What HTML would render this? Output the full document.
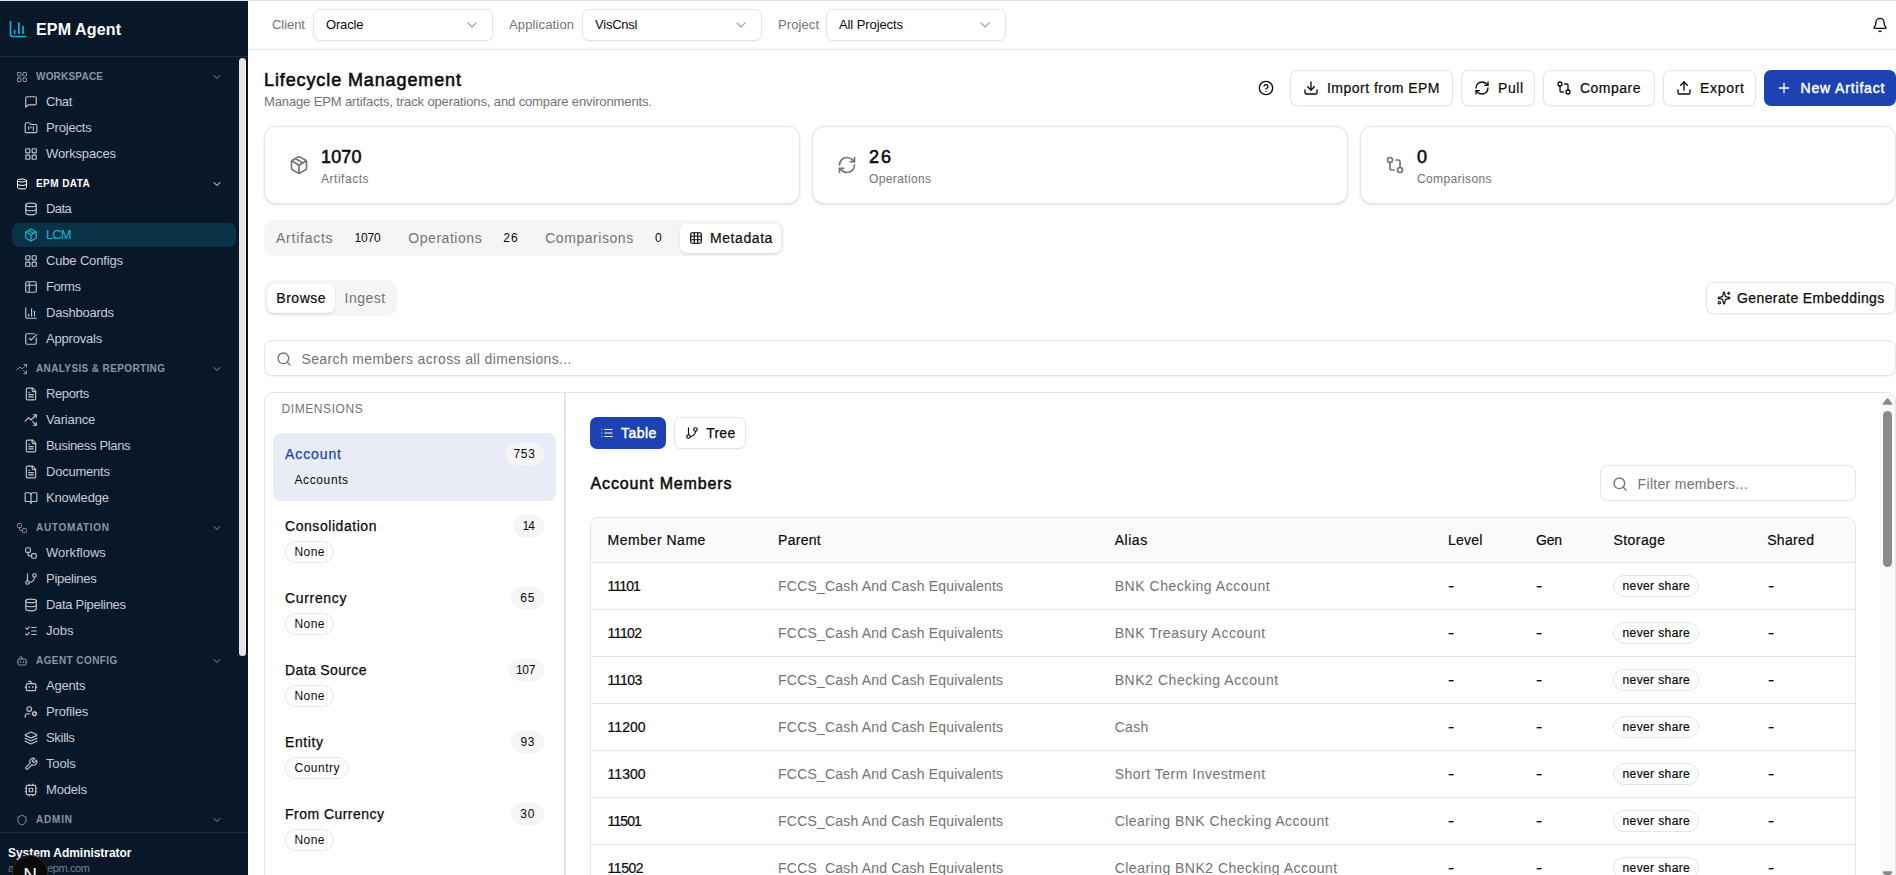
<!DOCTYPE html>
<html lang="en">
<head>
<meta charset="utf-8">
<title>EPM Agent - Lifecycle Management</title>
<style>
html,body{margin:0;padding:0;}
body{width:1896px;height:875px;overflow:hidden;position:relative;background:#fff;
 font-family:"Liberation Sans",sans-serif;-webkit-font-smoothing:antialiased;}
.b{position:absolute;}
.t{position:absolute;white-space:nowrap;}
.ic{position:absolute;overflow:visible;}
</style>
</head>
<body>
<aside>
<div class="b" style="left:0px;top:0px;width:248px;height:875px;background:#091828;"></div>
<div class="b" style="left:0px;top:56px;width:248px;height:1px;background:#1e2b3f;"></div>
<svg class="ic" style="left:8px;top:19px;width:20px;height:20px;" viewBox="0 0 24 24" fill="none" stroke="#12b5d4" stroke-width="2" stroke-linecap="round" stroke-linejoin="round"><path d="M3 3v16a2 2 0 0 0 2 2h16"/><path d="M18 17V9"/><path d="M13 17V5"/><path d="M8 17v-3"/></svg>
<span class="t" style="left:36px;top:20.0px;font-size:16px;line-height:20px;color:#ffffff;font-weight:700;letter-spacing:0.143px;">EPM Agent</span>
<div class="b" style="left:239px;top:58px;width:7px;height:598px;background:#e6e6e6;border-radius:3.5px;"></div>
<svg class="ic" style="left:16px;top:70.5px;width:12px;height:12px;" viewBox="0 0 24 24" fill="none" stroke="#8a94a3" stroke-width="2" stroke-linecap="round" stroke-linejoin="round"><rect width="7" height="7" x="3" y="3" rx="1"/><rect width="7" height="7" x="14" y="3" rx="1"/><rect width="7" height="7" x="14" y="14" rx="1"/><rect width="7" height="7" x="3" y="14" rx="1"/></svg>
<span class="t" style="left:36px;top:68.5px;font-size:10px;line-height:16px;color:#8a94a3;font-weight:700;letter-spacing:0.203px;">WORKSPACE</span>
<svg class="ic" style="left:211px;top:70.5px;width:12px;height:12px;" viewBox="0 0 24 24" fill="none" stroke="#8a94a3" stroke-width="2" stroke-linecap="round" stroke-linejoin="round"><path d="m6 9 6 6 6-6"/></svg>
<svg class="ic" style="left:24px;top:95.0px;width:14px;height:14px;" viewBox="0 0 24 24" fill="none" stroke="#bcc3ce" stroke-width="2" stroke-linecap="round" stroke-linejoin="round"><path d="M21 15a2 2 0 0 1-2 2H7l-4 4V5a2 2 0 0 1 2-2h14a2 2 0 0 1 2 2z"/></svg>
<span class="t" style="left:46px;top:92.0px;font-size:13px;line-height:20px;color:#c6ccd6;letter-spacing:-0.390px;">Chat</span>
<svg class="ic" style="left:24px;top:121.0px;width:14px;height:14px;" viewBox="0 0 24 24" fill="none" stroke="#bcc3ce" stroke-width="2" stroke-linecap="round" stroke-linejoin="round"><path d="M4 20h16a2 2 0 0 0 2-2V8a2 2 0 0 0-2-2h-7.93a2 2 0 0 1-1.66-.9l-.82-1.2A2 2 0 0 0 7.93 3H4a2 2 0 0 0-2 2v13c0 1.1.9 2 2 2Z"/><path d="M8 10v4"/><path d="M12 10v2"/><path d="M16 10v6"/></svg>
<span class="t" style="left:46px;top:118.0px;font-size:13px;line-height:20px;color:#c6ccd6;letter-spacing:-0.167px;">Projects</span>
<svg class="ic" style="left:24px;top:147.0px;width:14px;height:14px;" viewBox="0 0 24 24" fill="none" stroke="#bcc3ce" stroke-width="2" stroke-linecap="round" stroke-linejoin="round"><rect width="7" height="7" x="3" y="3" rx="1"/><rect width="7" height="7" x="14" y="3" rx="1"/><rect width="7" height="7" x="14" y="14" rx="1"/><rect width="7" height="7" x="3" y="14" rx="1"/></svg>
<span class="t" style="left:46px;top:144.0px;font-size:13px;line-height:20px;color:#c6ccd6;letter-spacing:-0.144px;">Workspaces</span>
<svg class="ic" style="left:16px;top:177.5px;width:12px;height:12px;" viewBox="0 0 24 24" fill="none" stroke="#ffffff" stroke-width="2" stroke-linecap="round" stroke-linejoin="round"><ellipse cx="12" cy="5" rx="9" ry="3"/><path d="M3 5V19A9 3 0 0 0 21 19V5"/><path d="M3 12A9 3 0 0 0 21 12"/></svg>
<span class="t" style="left:36px;top:175.5px;font-size:10px;line-height:16px;color:#ffffff;font-weight:700;letter-spacing:0.436px;">EPM DATA</span>
<svg class="ic" style="left:211px;top:177.5px;width:12px;height:12px;" viewBox="0 0 24 24" fill="none" stroke="#ffffff" stroke-width="2" stroke-linecap="round" stroke-linejoin="round"><path d="m6 9 6 6 6-6"/></svg>
<svg class="ic" style="left:24px;top:202.0px;width:14px;height:14px;" viewBox="0 0 24 24" fill="none" stroke="#bcc3ce" stroke-width="2" stroke-linecap="round" stroke-linejoin="round"><ellipse cx="12" cy="5" rx="9" ry="3"/><path d="M3 5V19A9 3 0 0 0 21 19V5"/><path d="M3 12A9 3 0 0 0 21 12"/></svg>
<span class="t" style="left:46px;top:199.0px;font-size:13px;line-height:20px;color:#c6ccd6;letter-spacing:-0.556px;">Data</span>
<div class="b" style="left:12px;top:223.0px;width:223.5px;height:24px;background:#093247;border-radius:7px;"></div>
<svg class="ic" style="left:24px;top:228.0px;width:14px;height:14px;" viewBox="0 0 24 24" fill="none" stroke="#12b5d4" stroke-width="2" stroke-linecap="round" stroke-linejoin="round"><path d="M11 21.73a2 2 0 0 0 2 0l7-4A2 2 0 0 0 21 16V8a2 2 0 0 0-1-1.73l-7-4a2 2 0 0 0-2 0l-7 4A2 2 0 0 0 3 8v8a2 2 0 0 0 1 1.73z"/><path d="M12 22V12"/><path d="m3.3 7 7.703 4.734a2 2 0 0 0 1.994 0L20.7 7"/><path d="m7.5 4.27 9 5.15"/></svg>
<span class="t" style="left:46px;top:225.0px;font-size:13px;line-height:20px;color:#12b5d4;letter-spacing:-0.900px;">LCM</span>
<svg class="ic" style="left:24px;top:254.0px;width:14px;height:14px;" viewBox="0 0 24 24" fill="none" stroke="#bcc3ce" stroke-width="2" stroke-linecap="round" stroke-linejoin="round"><rect width="7" height="7" x="3" y="3" rx="1"/><rect width="7" height="7" x="14" y="3" rx="1"/><rect width="7" height="7" x="14" y="14" rx="1"/><rect width="7" height="7" x="3" y="14" rx="1"/></svg>
<span class="t" style="left:46px;top:251.0px;font-size:13px;line-height:20px;color:#c6ccd6;letter-spacing:-0.162px;">Cube Configs</span>
<svg class="ic" style="left:24px;top:280.0px;width:14px;height:14px;" viewBox="0 0 24 24" fill="none" stroke="#bcc3ce" stroke-width="2" stroke-linecap="round" stroke-linejoin="round"><path d="M9 3H5a2 2 0 0 0-2 2v4m6-6h10a2 2 0 0 1 2 2v4M9 3v18m0 0h10a2 2 0 0 0 2-2V9M9 21H5a2 2 0 0 1-2-2V9m0 0h18"/></svg>
<span class="t" style="left:46px;top:277.0px;font-size:13px;line-height:20px;color:#c6ccd6;letter-spacing:-0.461px;">Forms</span>
<svg class="ic" style="left:24px;top:306.0px;width:14px;height:14px;" viewBox="0 0 24 24" fill="none" stroke="#bcc3ce" stroke-width="2" stroke-linecap="round" stroke-linejoin="round"><path d="M3 3v16a2 2 0 0 0 2 2h16"/><path d="M18 17V9"/><path d="M13 17V5"/><path d="M8 17v-3"/></svg>
<span class="t" style="left:46px;top:303.0px;font-size:13px;line-height:20px;color:#c6ccd6;letter-spacing:-0.234px;">Dashboards</span>
<svg class="ic" style="left:24px;top:332.0px;width:14px;height:14px;" viewBox="0 0 24 24" fill="none" stroke="#bcc3ce" stroke-width="2" stroke-linecap="round" stroke-linejoin="round"><path d="M21 10.5V19a2 2 0 0 1-2 2H5a2 2 0 0 1-2-2V5a2 2 0 0 1 2-2h12.5"/><path d="m9 11 3 3L22 4"/></svg>
<span class="t" style="left:46px;top:329.0px;font-size:13px;line-height:20px;color:#c6ccd6;letter-spacing:-0.189px;">Approvals</span>
<svg class="ic" style="left:16px;top:362.5px;width:12px;height:12px;" viewBox="0 0 24 24" fill="none" stroke="#8a94a3" stroke-width="2" stroke-linecap="round" stroke-linejoin="round"><path d="M14.828 14.828 21 21"/><path d="M21 16v5h-5"/><path d="m21 3-9 9-4-4-6 6"/><path d="M21 8V3h-5"/></svg>
<span class="t" style="left:36px;top:360.5px;font-size:10px;line-height:16px;color:#8a94a3;font-weight:700;letter-spacing:0.375px;">ANALYSIS &amp; REPORTING</span>
<svg class="ic" style="left:211px;top:362.5px;width:12px;height:12px;" viewBox="0 0 24 24" fill="none" stroke="#8a94a3" stroke-width="2" stroke-linecap="round" stroke-linejoin="round"><path d="m6 9 6 6 6-6"/></svg>
<svg class="ic" style="left:24px;top:387.0px;width:14px;height:14px;" viewBox="0 0 24 24" fill="none" stroke="#bcc3ce" stroke-width="2" stroke-linecap="round" stroke-linejoin="round"><path d="M15 2H6a2 2 0 0 0-2 2v16a2 2 0 0 0 2 2h12a2 2 0 0 0 2-2V7Z"/><path d="M14 2v4a2 2 0 0 0 2 2h4"/><path d="M10 9H8"/><path d="M16 13H8"/><path d="M16 17H8"/></svg>
<span class="t" style="left:46px;top:384.0px;font-size:13px;line-height:20px;color:#c6ccd6;letter-spacing:-0.372px;">Reports</span>
<svg class="ic" style="left:24px;top:413.0px;width:14px;height:14px;" viewBox="0 0 24 24" fill="none" stroke="#bcc3ce" stroke-width="2" stroke-linecap="round" stroke-linejoin="round"><path d="M14.828 14.828 21 21"/><path d="M21 16v5h-5"/><path d="m21 3-9 9-4-4-6 6"/><path d="M21 8V3h-5"/></svg>
<span class="t" style="left:46px;top:410.0px;font-size:13px;line-height:20px;color:#c6ccd6;letter-spacing:-0.149px;">Variance</span>
<svg class="ic" style="left:24px;top:439.0px;width:14px;height:14px;" viewBox="0 0 24 24" fill="none" stroke="#bcc3ce" stroke-width="2" stroke-linecap="round" stroke-linejoin="round"><path d="M15 2H6a2 2 0 0 0-2 2v16a2 2 0 0 0 2 2h12a2 2 0 0 0 2-2V7Z"/><path d="M14 2v4a2 2 0 0 0 2 2h4"/><path d="M10 9H8"/><path d="M16 13H8"/><path d="M16 17H8"/></svg>
<span class="t" style="left:46px;top:436.0px;font-size:13px;line-height:20px;color:#c6ccd6;letter-spacing:-0.330px;">Business Plans</span>
<svg class="ic" style="left:24px;top:465.0px;width:14px;height:14px;" viewBox="0 0 24 24" fill="none" stroke="#bcc3ce" stroke-width="2" stroke-linecap="round" stroke-linejoin="round"><path d="M15 2H6a2 2 0 0 0-2 2v16a2 2 0 0 0 2 2h12a2 2 0 0 0 2-2V7Z"/><path d="M14 2v4a2 2 0 0 0 2 2h4"/><path d="M10 9H8"/><path d="M16 13H8"/><path d="M16 17H8"/></svg>
<span class="t" style="left:46px;top:462.0px;font-size:13px;line-height:20px;color:#c6ccd6;letter-spacing:-0.219px;">Documents</span>
<svg class="ic" style="left:24px;top:491.0px;width:14px;height:14px;" viewBox="0 0 24 24" fill="none" stroke="#bcc3ce" stroke-width="2" stroke-linecap="round" stroke-linejoin="round"><path d="M12 7v14"/><path d="M3 18a1 1 0 0 1-1-1V4a1 1 0 0 1 1-1h5a4 4 0 0 1 4 4 4 4 0 0 1 4-4h5a1 1 0 0 1 1 1v13a1 1 0 0 1-1 1h-6a3 3 0 0 0-3 3 3 3 0 0 0-3-3z"/></svg>
<span class="t" style="left:46px;top:488.0px;font-size:13px;line-height:20px;color:#c6ccd6;letter-spacing:-0.166px;">Knowledge</span>
<svg class="ic" style="left:16px;top:521.5px;width:12px;height:12px;" viewBox="0 0 24 24" fill="none" stroke="#8a94a3" stroke-width="2" stroke-linecap="round" stroke-linejoin="round"><rect width="8" height="8" x="3" y="3" rx="2"/><path d="M7 11v4a2 2 0 0 0 2 2h4"/><rect width="8" height="8" x="13" y="13" rx="2"/></svg>
<span class="t" style="left:36px;top:519.5px;font-size:10px;line-height:16px;color:#8a94a3;font-weight:700;letter-spacing:0.682px;">AUTOMATION</span>
<svg class="ic" style="left:211px;top:521.5px;width:12px;height:12px;" viewBox="0 0 24 24" fill="none" stroke="#8a94a3" stroke-width="2" stroke-linecap="round" stroke-linejoin="round"><path d="m6 9 6 6 6-6"/></svg>
<svg class="ic" style="left:24px;top:546.0px;width:14px;height:14px;" viewBox="0 0 24 24" fill="none" stroke="#bcc3ce" stroke-width="2" stroke-linecap="round" stroke-linejoin="round"><rect width="8" height="8" x="3" y="3" rx="2"/><path d="M7 11v4a2 2 0 0 0 2 2h4"/><rect width="8" height="8" x="13" y="13" rx="2"/></svg>
<span class="t" style="left:46px;top:543.0px;font-size:13px;line-height:20px;color:#c6ccd6;letter-spacing:0.010px;">Workflows</span>
<svg class="ic" style="left:24px;top:572.0px;width:14px;height:14px;" viewBox="0 0 24 24" fill="none" stroke="#bcc3ce" stroke-width="2" stroke-linecap="round" stroke-linejoin="round"><line x1="6" x2="6" y1="3" y2="15"/><circle cx="18" cy="6" r="3"/><circle cx="6" cy="18" r="3"/><path d="M18 9a9 9 0 0 1-9 9"/></svg>
<span class="t" style="left:46px;top:569.0px;font-size:13px;line-height:20px;color:#c6ccd6;letter-spacing:-0.246px;">Pipelines</span>
<svg class="ic" style="left:24px;top:598.0px;width:14px;height:14px;" viewBox="0 0 24 24" fill="none" stroke="#bcc3ce" stroke-width="2" stroke-linecap="round" stroke-linejoin="round"><ellipse cx="12" cy="5" rx="9" ry="3"/><path d="M3 5V19A9 3 0 0 0 21 19V5"/><path d="M3 12A9 3 0 0 0 21 12"/></svg>
<span class="t" style="left:46px;top:595.0px;font-size:13px;line-height:20px;color:#c6ccd6;letter-spacing:-0.294px;">Data Pipelines</span>
<svg class="ic" style="left:24px;top:624.0px;width:14px;height:14px;" viewBox="0 0 24 24" fill="none" stroke="#bcc3ce" stroke-width="2" stroke-linecap="round" stroke-linejoin="round"><path d="m3 17 2 2 4-4"/><path d="m3 7 2 2 4-4"/><path d="M13 6h8"/><path d="M13 12h8"/><path d="M13 18h8"/></svg>
<span class="t" style="left:46px;top:621.0px;font-size:13px;line-height:20px;color:#c6ccd6;letter-spacing:0.010px;">Jobs</span>
<svg class="ic" style="left:16px;top:654.5px;width:12px;height:12px;" viewBox="0 0 24 24" fill="none" stroke="#8a94a3" stroke-width="2" stroke-linecap="round" stroke-linejoin="round"><path d="M12 8V4H8"/><rect width="16" height="12" x="4" y="8" rx="2"/><path d="M2 14h2"/><path d="M20 14h2"/><path d="M15 13v2"/><path d="M9 13v2"/></svg>
<span class="t" style="left:36px;top:652.5px;font-size:10px;line-height:16px;color:#8a94a3;font-weight:700;letter-spacing:0.421px;">AGENT CONFIG</span>
<svg class="ic" style="left:211px;top:654.5px;width:12px;height:12px;" viewBox="0 0 24 24" fill="none" stroke="#8a94a3" stroke-width="2" stroke-linecap="round" stroke-linejoin="round"><path d="m6 9 6 6 6-6"/></svg>
<svg class="ic" style="left:24px;top:679.0px;width:14px;height:14px;" viewBox="0 0 24 24" fill="none" stroke="#bcc3ce" stroke-width="2" stroke-linecap="round" stroke-linejoin="round"><path d="M12 8V4H8"/><rect width="16" height="12" x="4" y="8" rx="2"/><path d="M2 14h2"/><path d="M20 14h2"/><path d="M15 13v2"/><path d="M9 13v2"/></svg>
<span class="t" style="left:46px;top:676.0px;font-size:13px;line-height:20px;color:#c6ccd6;letter-spacing:-0.197px;">Agents</span>
<svg class="ic" style="left:24px;top:705.0px;width:14px;height:14px;" viewBox="0 0 24 24" fill="none" stroke="#bcc3ce" stroke-width="2" stroke-linecap="round" stroke-linejoin="round"><circle cx="18" cy="15" r="3"/><circle cx="9" cy="7" r="4"/><path d="M10 15H6a4 4 0 0 0-4 4v2"/><path d="m21.7 16.4-.9-.3"/><path d="m15.2 13.9-.9-.3"/><path d="m16.6 18.7.3-.9"/><path d="m19.1 12.2.3-.9"/><path d="m19.6 18.7-.4-1"/><path d="m16.8 12.3-.4-1"/><path d="m14.3 16.6 1-.4"/><path d="m20.7 13.8 1-.4"/></svg>
<span class="t" style="left:46px;top:702.0px;font-size:13px;line-height:20px;color:#c6ccd6;letter-spacing:-0.151px;">Profiles</span>
<svg class="ic" style="left:24px;top:731.0px;width:14px;height:14px;" viewBox="0 0 24 24" fill="none" stroke="#bcc3ce" stroke-width="2" stroke-linecap="round" stroke-linejoin="round"><path d="M12.83 2.18a2 2 0 0 0-1.66 0L2.6 6.08a1 1 0 0 0 0 1.83l8.58 3.91a2 2 0 0 0 1.66 0l8.58-3.9a1 1 0 0 0 0-1.83z"/><path d="M2 12a1 1 0 0 0 .58.91l8.6 3.91a2 2 0 0 0 1.65 0l8.58-3.9A1 1 0 0 0 22 12"/><path d="M2 17a1 1 0 0 0 .58.91l8.6 3.91a2 2 0 0 0 1.65 0l8.58-3.9A1 1 0 0 0 22 17"/></svg>
<span class="t" style="left:46px;top:728.0px;font-size:13px;line-height:20px;color:#c6ccd6;letter-spacing:-0.309px;">Skills</span>
<svg class="ic" style="left:24px;top:757.0px;width:14px;height:14px;" viewBox="0 0 24 24" fill="none" stroke="#bcc3ce" stroke-width="2" stroke-linecap="round" stroke-linejoin="round"><path d="M14.7 6.3a1 1 0 0 0 0 1.4l1.6 1.6a1 1 0 0 0 1.4 0l3.77-3.77a6 6 0 0 1-7.94 7.94l-6.91 6.91a2.12 2.12 0 0 1-3-3l6.91-6.91a6 6 0 0 1 7.94-7.94l-3.76 3.76z"/></svg>
<span class="t" style="left:46px;top:754.0px;font-size:13px;line-height:20px;color:#c6ccd6;letter-spacing:-0.140px;">Tools</span>
<svg class="ic" style="left:24px;top:783.0px;width:14px;height:14px;" viewBox="0 0 24 24" fill="none" stroke="#bcc3ce" stroke-width="2" stroke-linecap="round" stroke-linejoin="round"><rect width="16" height="16" x="4" y="4" rx="2"/><rect width="6" height="6" x="9" y="9" rx="1"/><path d="M15 2v2"/><path d="M15 20v2"/><path d="M2 15h2"/><path d="M2 9h2"/><path d="M20 15h2"/><path d="M20 9h2"/><path d="M9 2v2"/><path d="M9 20v2"/></svg>
<span class="t" style="left:46px;top:780.0px;font-size:13px;line-height:20px;color:#c6ccd6;letter-spacing:-0.184px;">Models</span>
<svg class="ic" style="left:16px;top:813.5px;width:12px;height:12px;" viewBox="0 0 24 24" fill="none" stroke="#8a94a3" stroke-width="2" stroke-linecap="round" stroke-linejoin="round"><path d="M20 13c0 5-3.5 7.5-7.66 8.95a1 1 0 0 1-.67-.01C7.5 20.5 4 18 4 13V6a1 1 0 0 1 1-1c2 0 4.5-1.2 6.24-2.72a1.17 1.17 0 0 1 1.52 0C14.51 3.81 17 5 19 5a1 1 0 0 1 1 1z"/></svg>
<span class="t" style="left:36px;top:811.5px;font-size:10px;line-height:16px;color:#8a94a3;font-weight:700;letter-spacing:0.805px;">ADMIN</span>
<svg class="ic" style="left:211px;top:813.5px;width:12px;height:12px;" viewBox="0 0 24 24" fill="none" stroke="#8a94a3" stroke-width="2" stroke-linecap="round" stroke-linejoin="round"><path d="m6 9 6 6 6-6"/></svg>
<div class="b" style="left:0px;top:832px;width:248px;height:1px;background:#1e2b3f;"></div>
<span class="t" style="left:8px;top:844.5px;font-size:12px;line-height:16px;color:#ffffff;font-weight:700;letter-spacing:-0.040px;">System Administrator</span>
<span class="t" style="left:8px;top:861.0px;font-size:11px;line-height:14px;color:#74818f;letter-spacing:-0.365px;">admin@epm.com</span>
<div class="b" style="left:12.5px;top:856px;width:34.5px;height:34.5px;border-radius:50%;background:#0a0a0a;box-shadow:0 0 0 1px #2a2a2a, 0 4px 10px rgba(0,0,0,.5);"></div>
<span class="t" style="left:23.2px;top:865.3px;font-size:19px;line-height:20px;color:#ffffff;">N</span>
</aside>
<main>
<div class="b" style="left:248px;top:0px;width:1648px;height:875px;background:#ffffff;"></div>
<div class="b" style="left:248px;top:49px;width:1648px;height:1px;background:#e5e5e5;"></div>
<span class="t" style="left:272px;top:14.5px;font-size:13px;line-height:20px;color:#737373;letter-spacing:-0.050px;">Client</span><div class="b" style="left:313px;top:9px;width:180px;height:32px;border:1px solid #e5e5e5;border-radius:7px;box-sizing:border-box;background:#fff;box-shadow:0 1px 2px rgba(0,0,0,.05);"></div><span class="t" style="left:326px;top:14.5px;font-size:13px;line-height:20px;color:#0a0a0a;letter-spacing:-0.159px;">Oracle</span><svg class="ic" style="left:463.5px;top:17px;width:16px;height:16px;" viewBox="0 0 24 24" fill="none" stroke="#a6a6a6" stroke-width="1.8" stroke-linecap="round" stroke-linejoin="round"><path d="m6 9 6 6 6-6"/></svg>
<span class="t" style="left:509px;top:14.5px;font-size:13px;line-height:20px;color:#737373;letter-spacing:0.139px;">Application</span><div class="b" style="left:582px;top:9px;width:180px;height:32px;border:1px solid #e5e5e5;border-radius:7px;box-sizing:border-box;background:#fff;box-shadow:0 1px 2px rgba(0,0,0,.05);"></div><span class="t" style="left:595px;top:14.5px;font-size:13px;line-height:20px;color:#0a0a0a;letter-spacing:-0.224px;">VisCnsl</span><svg class="ic" style="left:732.5px;top:17px;width:16px;height:16px;" viewBox="0 0 24 24" fill="none" stroke="#a6a6a6" stroke-width="1.8" stroke-linecap="round" stroke-linejoin="round"><path d="m6 9 6 6 6-6"/></svg>
<span class="t" style="left:778px;top:14.5px;font-size:13px;line-height:20px;color:#737373;letter-spacing:0.089px;">Project</span><div class="b" style="left:826px;top:9px;width:180px;height:32px;border:1px solid #e5e5e5;border-radius:7px;box-sizing:border-box;background:#fff;box-shadow:0 1px 2px rgba(0,0,0,.05);"></div><span class="t" style="left:839px;top:14.5px;font-size:13px;line-height:20px;color:#0a0a0a;letter-spacing:-0.094px;">All Projects</span><svg class="ic" style="left:976.5px;top:17px;width:16px;height:16px;" viewBox="0 0 24 24" fill="none" stroke="#a6a6a6" stroke-width="1.8" stroke-linecap="round" stroke-linejoin="round"><path d="m6 9 6 6 6-6"/></svg>
<svg class="ic" style="left:1872px;top:17px;width:16px;height:16px;" viewBox="0 0 24 24" fill="none" stroke="#0a0a0a" stroke-width="2" stroke-linecap="round" stroke-linejoin="round"><path d="M10.268 21a2 2 0 0 0 3.464 0"/><path d="M3.262 15.326A1 1 0 0 0 4 17h16a1 1 0 0 0 .74-1.673C19.41 13.956 18 12.499 18 8A6 6 0 0 0 6 8c0 4.499-1.411 5.956-2.738 7.326"/></svg>
<span class="t" style="left:264px;top:65.5px;font-size:18px;line-height:28px;color:#0a0a0a;letter-spacing:0.889px;-webkit-text-stroke:.55px #0a0a0a;">Lifecycle Management</span>
<span class="t" style="left:264px;top:91.5px;font-size:13px;line-height:20px;color:#737373;letter-spacing:-0.125px;">Manage EPM artifacts, track operations, and compare environments.</span>
<svg class="ic" style="left:1258px;top:80px;width:16px;height:16px;" viewBox="0 0 24 24" fill="none" stroke="#0a0a0a" stroke-width="2" stroke-linecap="round" stroke-linejoin="round"><circle cx="12" cy="12" r="10"/><path d="M9.09 9a3 3 0 0 1 5.83 1c0 2-3 3-3 3"/><path d="M12 17h.01"/></svg>
<div class="b" style="left:1290px;top:70px;width:163px;height:36px;border:1px solid #e5e5e5;border-radius:7px;box-sizing:border-box;background:#fff;box-shadow:0 1px 2px rgba(0,0,0,.05);"></div><svg class="ic" style="left:1303px;top:80.0px;width:16px;height:16px;" viewBox="0 0 24 24" fill="none" stroke="#0a0a0a" stroke-width="2" stroke-linecap="round" stroke-linejoin="round"><path d="M21 15v4a2 2 0 0 1-2 2H5a2 2 0 0 1-2-2v-4"/><polyline points="7 10 12 15 17 10"/><line x1="12" x2="12" y1="15" y2="3"/></svg><span class="t" style="left:1327px;top:78.0px;font-size:14px;line-height:20px;color:#0a0a0a;letter-spacing:0.479px;-webkit-text-stroke:.2px #0a0a0a;">Import from EPM</span>
<div class="b" style="left:1461px;top:70px;width:74px;height:36px;border:1px solid #e5e5e5;border-radius:7px;box-sizing:border-box;background:#fff;box-shadow:0 1px 2px rgba(0,0,0,.05);"></div><svg class="ic" style="left:1474px;top:80.0px;width:16px;height:16px;" viewBox="0 0 24 24" fill="none" stroke="#0a0a0a" stroke-width="2" stroke-linecap="round" stroke-linejoin="round"><path d="M3 12a9 9 0 0 1 9-9 9.75 9.75 0 0 1 6.74 2.74L21 8"/><path d="M21 3v5h-5"/><path d="M21 12a9 9 0 0 1-9 9 9.75 9.75 0 0 1-6.74-2.74L3 16"/><path d="M8 16H3v5"/></svg><span class="t" style="left:1498px;top:78.0px;font-size:14px;line-height:20px;color:#0a0a0a;letter-spacing:0.547px;-webkit-text-stroke:.2px #0a0a0a;">Pull</span>
<div class="b" style="left:1543px;top:70px;width:112px;height:36px;border:1px solid #e5e5e5;border-radius:7px;box-sizing:border-box;background:#fff;box-shadow:0 1px 2px rgba(0,0,0,.05);"></div><svg class="ic" style="left:1556px;top:80.0px;width:16px;height:16px;" viewBox="0 0 24 24" fill="none" stroke="#0a0a0a" stroke-width="2" stroke-linecap="round" stroke-linejoin="round"><circle cx="18" cy="18" r="3"/><circle cx="6" cy="6" r="3"/><path d="M13 6h3a2 2 0 0 1 2 2v7"/><path d="M11 18H8a2 2 0 0 1-2-2V9"/></svg><span class="t" style="left:1580px;top:78.0px;font-size:14px;line-height:20px;color:#0a0a0a;letter-spacing:0.484px;-webkit-text-stroke:.2px #0a0a0a;">Compare</span>
<div class="b" style="left:1663px;top:70px;width:93px;height:36px;border:1px solid #e5e5e5;border-radius:7px;box-sizing:border-box;background:#fff;box-shadow:0 1px 2px rgba(0,0,0,.05);"></div><svg class="ic" style="left:1676px;top:80.0px;width:16px;height:16px;" viewBox="0 0 24 24" fill="none" stroke="#0a0a0a" stroke-width="2" stroke-linecap="round" stroke-linejoin="round"><path d="M21 15v4a2 2 0 0 1-2 2H5a2 2 0 0 1-2-2v-4"/><polyline points="17 8 12 3 7 8"/><line x1="12" x2="12" y1="3" y2="15"/></svg><span class="t" style="left:1700px;top:78.0px;font-size:14px;line-height:20px;color:#0a0a0a;letter-spacing:0.706px;-webkit-text-stroke:.2px #0a0a0a;">Export</span>
<div class="b" style="left:1764px;top:70px;width:132px;height:36px;background:#1d42b2;border-radius:7px;"></div><svg class="ic" style="left:1776px;top:80.0px;width:16px;height:16px;" viewBox="0 0 24 24" fill="none" stroke="#ffffff" stroke-width="2" stroke-linecap="round" stroke-linejoin="round"><path d="M5 12h14"/><path d="M12 5v14"/></svg><span class="t" style="left:1800.5px;top:78.0px;font-size:14px;line-height:20px;color:#ffffff;letter-spacing:0.845px;-webkit-text-stroke:.45px #fff;">New Artifact</span>
<div class="b" style="left:264px;top:126px;width:536px;height:78px;border:1px solid #e5e5e5;border-radius:12px;box-sizing:border-box;background:#fff;box-shadow:0 1px 3px rgba(0,0,0,.1),0 1px 2px -1px rgba(0,0,0,.1);"></div><svg class="ic" style="left:289px;top:155px;width:20px;height:20px;" viewBox="0 0 24 24" fill="none" stroke="#737373" stroke-width="2" stroke-linecap="round" stroke-linejoin="round"><path d="M11 21.73a2 2 0 0 0 2 0l7-4A2 2 0 0 0 21 16V8a2 2 0 0 0-1-1.73l-7-4a2 2 0 0 0-2 0l-7 4A2 2 0 0 0 3 8v8a2 2 0 0 0 1 1.73z"/><path d="M12 22V12"/><path d="m3.3 7 7.703 4.734a2 2 0 0 0 1.994 0L20.7 7"/><path d="m7.5 4.27 9 5.15"/></svg><span class="t" style="left:321px;top:143.0px;font-size:18px;line-height:28px;color:#0a0a0a;letter-spacing:0.151px;-webkit-text-stroke:.55px #0a0a0a;">1070</span><span class="t" style="left:321px;top:171.0px;font-size:12px;line-height:16px;color:#737373;letter-spacing:0.520px;">Artifacts</span>
<div class="b" style="left:812px;top:126px;width:536px;height:78px;border:1px solid #e5e5e5;border-radius:12px;box-sizing:border-box;background:#fff;box-shadow:0 1px 3px rgba(0,0,0,.1),0 1px 2px -1px rgba(0,0,0,.1);"></div><svg class="ic" style="left:837px;top:155px;width:20px;height:20px;" viewBox="0 0 24 24" fill="none" stroke="#737373" stroke-width="2" stroke-linecap="round" stroke-linejoin="round"><path d="M3 12a9 9 0 0 1 9-9 9.75 9.75 0 0 1 6.74 2.74L21 8"/><path d="M21 3v5h-5"/><path d="M21 12a9 9 0 0 1-9 9 9.75 9.75 0 0 1-6.74-2.74L3 16"/><path d="M8 16H3v5"/></svg><span class="t" style="left:869px;top:143.0px;font-size:18px;line-height:28px;color:#0a0a0a;letter-spacing:1.969px;-webkit-text-stroke:.55px #0a0a0a;">26</span><span class="t" style="left:869px;top:171.0px;font-size:12px;line-height:16px;color:#737373;letter-spacing:0.366px;">Operations</span>
<div class="b" style="left:1360px;top:126px;width:536px;height:78px;border:1px solid #e5e5e5;border-radius:12px;box-sizing:border-box;background:#fff;box-shadow:0 1px 3px rgba(0,0,0,.1),0 1px 2px -1px rgba(0,0,0,.1);"></div><svg class="ic" style="left:1385px;top:155px;width:20px;height:20px;" viewBox="0 0 24 24" fill="none" stroke="#737373" stroke-width="2" stroke-linecap="round" stroke-linejoin="round"><circle cx="18" cy="18" r="3"/><circle cx="6" cy="6" r="3"/><path d="M13 6h3a2 2 0 0 1 2 2v7"/><path d="M11 18H8a2 2 0 0 1-2-2V9"/></svg><span class="t" style="left:1417px;top:143.0px;font-size:18px;line-height:28px;color:#0a0a0a;letter-spacing:0.000px;-webkit-text-stroke:.55px #0a0a0a;">0</span><span class="t" style="left:1417px;top:171.0px;font-size:12px;line-height:16px;color:#737373;letter-spacing:0.380px;">Comparisons</span>
<div class="b" style="left:264px;top:220px;width:520px;height:36px;background:#f5f5f5;border-radius:10px;"></div>
<span class="t" style="left:276px;top:228.0px;font-size:14px;line-height:20px;color:#737373;letter-spacing:0.753px;">Artifacts</span>
<span class="t" style="left:354.6px;top:230.0px;font-size:12px;line-height:16px;color:#0a0a0a;letter-spacing:-0.234px;">1070</span>
<span class="t" style="left:408.3px;top:228.0px;font-size:14px;line-height:20px;color:#737373;letter-spacing:0.546px;">Operations</span>
<span class="t" style="left:503.2px;top:230.0px;font-size:12px;line-height:16px;color:#0a0a0a;letter-spacing:1.141px;">26</span>
<span class="t" style="left:545.2px;top:228.0px;font-size:14px;line-height:20px;color:#737373;letter-spacing:0.552px;">Comparisons</span>
<span class="t" style="left:654.9px;top:230.0px;font-size:12px;line-height:16px;color:#0a0a0a;letter-spacing:0.000px;">0</span>
<div class="b" style="left:680px;top:224px;width:101px;height:29px;background:#fff;border-radius:7px;box-shadow:0 1px 3px rgba(0,0,0,.1),0 1px 2px -1px rgba(0,0,0,.1);"></div>
<svg class="ic" style="left:689px;top:231px;width:14px;height:14px;" viewBox="0 0 24 24" fill="none" stroke="#0a0a0a" stroke-width="2" stroke-linecap="round" stroke-linejoin="round"><rect width="18" height="18" x="3" y="3" rx="2"/><path d="M3 9h18"/><path d="M3 15h18"/><path d="M9 3v18"/><path d="M15 3v18"/></svg>
<span class="t" style="left:710px;top:228.0px;font-size:14px;line-height:20px;color:#0a0a0a;letter-spacing:0.575px;-webkit-text-stroke:.2px #0a0a0a;">Metadata</span>
<div class="b" style="left:264px;top:280px;width:133px;height:36px;background:#f5f5f5;border-radius:10px;"></div>
<div class="b" style="left:267px;top:284px;width:68px;height:29px;background:#fff;border-radius:7px;box-shadow:0 1px 3px rgba(0,0,0,.1),0 1px 2px -1px rgba(0,0,0,.1);"></div>
<span class="t" style="left:276.3px;top:288.0px;font-size:14px;line-height:20px;color:#0a0a0a;letter-spacing:0.522px;-webkit-text-stroke:.2px #0a0a0a;">Browse</span>
<span class="t" style="left:344.5px;top:288.0px;font-size:14px;line-height:20px;color:#737373;letter-spacing:0.492px;">Ingest</span>
<div class="b" style="left:1706px;top:282px;width:190px;height:32px;border:1px solid #e5e5e5;border-radius:7px;box-sizing:border-box;background:#fff;box-shadow:0 1px 2px rgba(0,0,0,.05);"></div>
<svg class="ic" style="left:1717px;top:291px;width:14px;height:14px;" viewBox="0 0 24 24" fill="none" stroke="#0a0a0a" stroke-width="2" stroke-linecap="round" stroke-linejoin="round"><path d="M11.017 2.814a1 1 0 0 1 1.966 0l1.051 5.558a2 2 0 0 0 1.594 1.594l5.558 1.051a1 1 0 0 1 0 1.966l-5.558 1.051a2 2 0 0 0-1.594 1.594l-1.051 5.558a1 1 0 0 1-1.966 0l-1.051-5.558a2 2 0 0 0-1.594-1.594l-5.558-1.051a1 1 0 0 1 0-1.966l5.558-1.051a2 2 0 0 0 1.594-1.594z"/><path d="M20 2v4"/><path d="M22 4h-4"/><circle cx="4" cy="20" r="2"/></svg>
<span class="t" style="left:1737px;top:288.0px;font-size:14px;line-height:20px;color:#0a0a0a;letter-spacing:0.400px;-webkit-text-stroke:.25px #0a0a0a;">Generate Embeddings</span>
<div class="b" style="left:264px;top:340px;width:1632px;height:36px;border:1px solid #e5e5e5;border-radius:8px;box-sizing:border-box;background:#fff;box-shadow:0 1px 2px rgba(0,0,0,.05);"></div>
<svg class="ic" style="left:276px;top:350.5px;width:16px;height:16px;" viewBox="0 0 24 24" fill="none" stroke="#737373" stroke-width="2" stroke-linecap="round" stroke-linejoin="round"><circle cx="11" cy="11" r="8"/><path d="m21 21-4.3-4.3"/></svg>
<span class="t" style="left:301.5px;top:348.5px;font-size:14px;line-height:20px;color:#737373;letter-spacing:0.368px;">Search members across all dimensions...</span>
<div class="b" style="left:264px;top:392px;width:1632px;height:500px;border:1px solid #e5e5e5;border-radius:9px;box-sizing:border-box;background:#fff;"></div>
<div class="b" style="left:564px;top:393px;width:2px;height:490px;background:#e5e5e5;"></div>
<span class="t" style="left:281.5px;top:401.0px;font-size:12px;line-height:16px;color:#737373;letter-spacing:0.587px;">DIMENSIONS</span>
<div class="b" style="left:273px;top:433px;width:283px;height:68px;background:#e9ecf7;border-radius:8px;"></div>
<span class="t" style="left:285px;top:444.0px;font-size:14px;line-height:20px;color:#1d42b2;letter-spacing:0.901px;-webkit-text-stroke:.25px currentColor;">Account</span>
<div class="b" style="left:504.70000000000005px;top:443px;width:39px;height:22px;background:#f5f5f5;border-radius:11px;"></div>
<span class="t" style="left:513.45px;top:446.0px;font-size:12px;line-height:16px;color:#0a0a0a;letter-spacing:0.734px;">753</span>
<div class="b" style="left:285px;top:469px;width:72.1px;height:22px;border:1px solid #e5e5e5;border-radius:11px;box-sizing:border-box;background:transparent;"></div>
<span class="t" style="left:294.5px;top:472.0px;font-size:12px;line-height:16px;color:#0a0a0a;letter-spacing:0.606px;">Accounts</span>
<span class="t" style="left:285px;top:516.0px;font-size:14px;line-height:20px;color:#0a0a0a;letter-spacing:0.555px;-webkit-text-stroke:.25px currentColor;">Consolidation</span>
<div class="b" style="left:513.2px;top:515px;width:30.5px;height:22px;background:#f5f5f5;border-radius:11px;"></div>
<span class="t" style="left:522.5500000000001px;top:518.0px;font-size:12px;line-height:16px;color:#0a0a0a;letter-spacing:-0.900px;">14</span>
<div class="b" style="left:285px;top:541px;width:48.5px;height:22px;border:1px solid #e5e5e5;border-radius:11px;box-sizing:border-box;background:#fff;"></div>
<span class="t" style="left:294.5px;top:544.0px;font-size:12px;line-height:16px;color:#0a0a0a;letter-spacing:0.438px;">None</span>
<span class="t" style="left:285px;top:588.0px;font-size:14px;line-height:20px;color:#0a0a0a;letter-spacing:0.672px;-webkit-text-stroke:.25px currentColor;">Currency</span>
<div class="b" style="left:511.00000000000006px;top:587px;width:32.7px;height:22px;background:#f5f5f5;border-radius:11px;"></div>
<span class="t" style="left:520.35px;top:590.0px;font-size:12px;line-height:16px;color:#0a0a0a;letter-spacing:0.641px;">65</span>
<div class="b" style="left:285px;top:613px;width:48.5px;height:22px;border:1px solid #e5e5e5;border-radius:11px;box-sizing:border-box;background:#fff;"></div>
<span class="t" style="left:294.5px;top:616.0px;font-size:12px;line-height:16px;color:#0a0a0a;letter-spacing:0.438px;">None</span>
<span class="t" style="left:285px;top:660.0px;font-size:14px;line-height:20px;color:#0a0a0a;letter-spacing:0.367px;-webkit-text-stroke:.25px currentColor;">Data Source</span>
<div class="b" style="left:507.70000000000005px;top:659px;width:36px;height:22px;background:#f5f5f5;border-radius:11px;"></div>
<span class="t" style="left:515.95px;top:662.0px;font-size:12px;line-height:16px;color:#0a0a0a;letter-spacing:-0.266px;">107</span>
<div class="b" style="left:285px;top:685px;width:48.5px;height:22px;border:1px solid #e5e5e5;border-radius:11px;box-sizing:border-box;background:#fff;"></div>
<span class="t" style="left:294.5px;top:688.0px;font-size:12px;line-height:16px;color:#0a0a0a;letter-spacing:0.438px;">None</span>
<span class="t" style="left:285px;top:732.0px;font-size:14px;line-height:20px;color:#0a0a0a;letter-spacing:0.597px;-webkit-text-stroke:.25px currentColor;">Entity</span>
<div class="b" style="left:511.1px;top:731px;width:32.6px;height:22px;background:#f5f5f5;border-radius:11px;"></div>
<span class="t" style="left:520.4px;top:734.0px;font-size:12px;line-height:16px;color:#0a0a0a;letter-spacing:0.641px;">93</span>
<div class="b" style="left:285px;top:757px;width:63.5px;height:22px;border:1px solid #e5e5e5;border-radius:11px;box-sizing:border-box;background:#fff;"></div>
<span class="t" style="left:294.5px;top:760.0px;font-size:12px;line-height:16px;color:#0a0a0a;letter-spacing:0.495px;">Country</span>
<span class="t" style="left:285px;top:804.0px;font-size:14px;line-height:20px;color:#0a0a0a;letter-spacing:0.470px;-webkit-text-stroke:.25px currentColor;">From Currency</span>
<div class="b" style="left:511.1px;top:803px;width:32.6px;height:22px;background:#f5f5f5;border-radius:11px;"></div>
<span class="t" style="left:520.3000000000001px;top:806.0px;font-size:12px;line-height:16px;color:#0a0a0a;letter-spacing:0.841px;">30</span>
<div class="b" style="left:285px;top:829px;width:48.5px;height:22px;border:1px solid #e5e5e5;border-radius:11px;box-sizing:border-box;background:#fff;"></div>
<span class="t" style="left:294.5px;top:832.0px;font-size:12px;line-height:16px;color:#0a0a0a;letter-spacing:0.438px;">None</span>
<div class="b" style="left:590px;top:417px;width:76px;height:32px;background:#1d42b2;border-radius:7px;"></div>
<svg class="ic" style="left:600px;top:426px;width:14px;height:14px;" viewBox="0 0 24 24" fill="none" stroke="#fff" stroke-width="2" stroke-linecap="round" stroke-linejoin="round"><path d="M3 12h.01"/><path d="M3 18h.01"/><path d="M3 6h.01"/><path d="M8 12h13"/><path d="M8 18h13"/><path d="M8 6h13"/></svg>
<span class="t" style="left:621px;top:423.0px;font-size:14px;line-height:20px;color:#fff;letter-spacing:0.458px;-webkit-text-stroke:.45px #fff;">Table</span>
<div class="b" style="left:674px;top:417px;width:72px;height:32px;border:1px solid #e5e5e5;border-radius:7px;box-sizing:border-box;background:#fff;box-shadow:0 1px 2px rgba(0,0,0,.05);"></div>
<svg class="ic" style="left:685px;top:426px;width:14px;height:14px;" viewBox="0 0 24 24" fill="none" stroke="#0a0a0a" stroke-width="2" stroke-linecap="round" stroke-linejoin="round"><line x1="6" x2="6" y1="3" y2="15"/><circle cx="18" cy="6" r="3"/><circle cx="6" cy="18" r="3"/><path d="M18 9a9 9 0 0 1-9 9"/></svg>
<span class="t" style="left:706.2px;top:423.0px;font-size:14px;line-height:20px;color:#0a0a0a;letter-spacing:0.240px;-webkit-text-stroke:.25px #0a0a0a;">Tree</span>
<span class="t" style="left:590.5px;top:471.5px;font-size:16px;line-height:24px;color:#0a0a0a;letter-spacing:0.862px;-webkit-text-stroke:.5px #0a0a0a;">Account Members</span>
<div class="b" style="left:1600px;top:465px;width:256px;height:36px;border:1px solid #e5e5e5;border-radius:8px;box-sizing:border-box;background:#fff;box-shadow:0 1px 2px rgba(0,0,0,.05);"></div>
<svg class="ic" style="left:1612px;top:475.5px;width:16px;height:16px;" viewBox="0 0 24 24" fill="none" stroke="#737373" stroke-width="2" stroke-linecap="round" stroke-linejoin="round"><circle cx="11" cy="11" r="8"/><path d="m21 21-4.3-4.3"/></svg>
<span class="t" style="left:1637.6px;top:473.5px;font-size:14px;line-height:20px;color:#737373;letter-spacing:0.312px;">Filter members...</span>
<div class="b" style="left:590px;top:517px;width:1266px;height:380px;border:1px solid #e5e5e5;border-radius:8px;box-sizing:border-box;background:#fff;"></div>
<div class="b" style="left:591px;top:518px;width:1264px;height:44px;background:#fafafa;border-radius:7px 7px 0 0;"></div>
<div class="b" style="left:591px;top:562px;width:1264px;height:1px;background:#e5e5e5;"></div>
<span class="t" style="left:607.6px;top:530.0px;font-size:14px;line-height:20px;color:#0a0a0a;letter-spacing:0.521px;-webkit-text-stroke:.2px #0a0a0a;">Member Name</span>
<span class="t" style="left:778.1px;top:530.0px;font-size:14px;line-height:20px;color:#0a0a0a;letter-spacing:0.270px;-webkit-text-stroke:.2px #0a0a0a;">Parent</span>
<span class="t" style="left:1114.7px;top:530.0px;font-size:14px;line-height:20px;color:#0a0a0a;letter-spacing:0.535px;-webkit-text-stroke:.2px #0a0a0a;">Alias</span>
<span class="t" style="left:1448.1px;top:530.0px;font-size:14px;line-height:20px;color:#0a0a0a;letter-spacing:0.208px;-webkit-text-stroke:.2px #0a0a0a;">Level</span>
<span class="t" style="left:1536px;top:530.0px;font-size:14px;line-height:20px;color:#0a0a0a;letter-spacing:-0.234px;-webkit-text-stroke:.2px #0a0a0a;">Gen</span>
<span class="t" style="left:1613.5px;top:530.0px;font-size:14px;line-height:20px;color:#0a0a0a;letter-spacing:0.426px;-webkit-text-stroke:.2px #0a0a0a;">Storage</span>
<span class="t" style="left:1767.2px;top:530.0px;font-size:14px;line-height:20px;color:#0a0a0a;letter-spacing:0.329px;-webkit-text-stroke:.2px #0a0a0a;">Shared</span>
<span class="t" style="left:607.6px;top:576.0px;font-size:14px;line-height:20px;color:#0a0a0a;letter-spacing:-0.900px;-webkit-text-stroke:.2px #0a0a0a;">11101</span>
<span class="t" style="left:778.1px;top:576.0px;font-size:14px;line-height:20px;color:#737373;letter-spacing:0.191px;">FCCS_Cash And Cash Equivalents</span>
<span class="t" style="left:1114.7px;top:576.0px;font-size:14px;line-height:20px;color:#737373;letter-spacing:0.539px;">BNK Checking Account</span>
<span class="t" style="left:1448.4px;top:576.0px;font-size:14px;line-height:20px;color:#0a0a0a;transform:scaleX(1.35);transform-origin:0 50%;-webkit-text-stroke:.2px #0a0a0a;">-</span>
<span class="t" style="left:1536.3px;top:576.0px;font-size:14px;line-height:20px;color:#0a0a0a;transform:scaleX(1.35);transform-origin:0 50%;-webkit-text-stroke:.2px #0a0a0a;">-</span>
<div class="b" style="left:1613px;top:575px;width:86px;height:22px;border:1px solid #e5e5e5;border-radius:11px;box-sizing:border-box;background:#fff;"></div>
<span class="t" style="left:1622.5px;top:578.0px;font-size:12px;line-height:16px;color:#0a0a0a;letter-spacing:0.392px;-webkit-text-stroke:.2px #0a0a0a;">never share</span>
<span class="t" style="left:1767.5px;top:576.0px;font-size:14px;line-height:20px;color:#0a0a0a;transform:scaleX(1.35);transform-origin:0 50%;-webkit-text-stroke:.2px #0a0a0a;">-</span>
<div class="b" style="left:591px;top:609px;width:1264px;height:1px;background:#e5e5e5;"></div>
<span class="t" style="left:607.6px;top:623.0px;font-size:14px;line-height:20px;color:#0a0a0a;letter-spacing:-0.590px;-webkit-text-stroke:.2px #0a0a0a;">11102</span>
<span class="t" style="left:778.1px;top:623.0px;font-size:14px;line-height:20px;color:#737373;letter-spacing:0.191px;">FCCS_Cash And Cash Equivalents</span>
<span class="t" style="left:1114.7px;top:623.0px;font-size:14px;line-height:20px;color:#737373;letter-spacing:0.508px;">BNK Treasury Account</span>
<span class="t" style="left:1448.4px;top:623.0px;font-size:14px;line-height:20px;color:#0a0a0a;transform:scaleX(1.35);transform-origin:0 50%;-webkit-text-stroke:.2px #0a0a0a;">-</span>
<span class="t" style="left:1536.3px;top:623.0px;font-size:14px;line-height:20px;color:#0a0a0a;transform:scaleX(1.35);transform-origin:0 50%;-webkit-text-stroke:.2px #0a0a0a;">-</span>
<div class="b" style="left:1613px;top:622px;width:86px;height:22px;border:1px solid #e5e5e5;border-radius:11px;box-sizing:border-box;background:#fff;"></div>
<span class="t" style="left:1622.5px;top:625.0px;font-size:12px;line-height:16px;color:#0a0a0a;letter-spacing:0.392px;-webkit-text-stroke:.2px #0a0a0a;">never share</span>
<span class="t" style="left:1767.5px;top:623.0px;font-size:14px;line-height:20px;color:#0a0a0a;transform:scaleX(1.35);transform-origin:0 50%;-webkit-text-stroke:.2px #0a0a0a;">-</span>
<div class="b" style="left:591px;top:656px;width:1264px;height:1px;background:#e5e5e5;"></div>
<span class="t" style="left:607.6px;top:670.0px;font-size:14px;line-height:20px;color:#0a0a0a;letter-spacing:-0.540px;-webkit-text-stroke:.2px #0a0a0a;">11103</span>
<span class="t" style="left:778.1px;top:670.0px;font-size:14px;line-height:20px;color:#737373;letter-spacing:0.191px;">FCCS_Cash And Cash Equivalents</span>
<span class="t" style="left:1114.7px;top:670.0px;font-size:14px;line-height:20px;color:#737373;letter-spacing:0.548px;">BNK2 Checking Account</span>
<span class="t" style="left:1448.4px;top:670.0px;font-size:14px;line-height:20px;color:#0a0a0a;transform:scaleX(1.35);transform-origin:0 50%;-webkit-text-stroke:.2px #0a0a0a;">-</span>
<span class="t" style="left:1536.3px;top:670.0px;font-size:14px;line-height:20px;color:#0a0a0a;transform:scaleX(1.35);transform-origin:0 50%;-webkit-text-stroke:.2px #0a0a0a;">-</span>
<div class="b" style="left:1613px;top:669px;width:86px;height:22px;border:1px solid #e5e5e5;border-radius:11px;box-sizing:border-box;background:#fff;"></div>
<span class="t" style="left:1622.5px;top:672.0px;font-size:12px;line-height:16px;color:#0a0a0a;letter-spacing:0.392px;-webkit-text-stroke:.2px #0a0a0a;">never share</span>
<span class="t" style="left:1767.5px;top:670.0px;font-size:14px;line-height:20px;color:#0a0a0a;transform:scaleX(1.35);transform-origin:0 50%;-webkit-text-stroke:.2px #0a0a0a;">-</span>
<div class="b" style="left:591px;top:703px;width:1264px;height:1px;background:#e5e5e5;"></div>
<span class="t" style="left:607.6px;top:717.0px;font-size:14px;line-height:20px;color:#0a0a0a;letter-spacing:0.023px;-webkit-text-stroke:.2px #0a0a0a;">11200</span>
<span class="t" style="left:778.1px;top:717.0px;font-size:14px;line-height:20px;color:#737373;letter-spacing:0.191px;">FCCS_Cash And Cash Equivalents</span>
<span class="t" style="left:1114.7px;top:717.0px;font-size:14px;line-height:20px;color:#737373;letter-spacing:0.271px;">Cash</span>
<span class="t" style="left:1448.4px;top:717.0px;font-size:14px;line-height:20px;color:#0a0a0a;transform:scaleX(1.35);transform-origin:0 50%;-webkit-text-stroke:.2px #0a0a0a;">-</span>
<span class="t" style="left:1536.3px;top:717.0px;font-size:14px;line-height:20px;color:#0a0a0a;transform:scaleX(1.35);transform-origin:0 50%;-webkit-text-stroke:.2px #0a0a0a;">-</span>
<div class="b" style="left:1613px;top:716px;width:86px;height:22px;border:1px solid #e5e5e5;border-radius:11px;box-sizing:border-box;background:#fff;"></div>
<span class="t" style="left:1622.5px;top:719.0px;font-size:12px;line-height:16px;color:#0a0a0a;letter-spacing:0.392px;-webkit-text-stroke:.2px #0a0a0a;">never share</span>
<span class="t" style="left:1767.5px;top:717.0px;font-size:14px;line-height:20px;color:#0a0a0a;transform:scaleX(1.35);transform-origin:0 50%;-webkit-text-stroke:.2px #0a0a0a;">-</span>
<div class="b" style="left:591px;top:750px;width:1264px;height:1px;background:#e5e5e5;"></div>
<span class="t" style="left:607.6px;top:764.0px;font-size:14px;line-height:20px;color:#0a0a0a;letter-spacing:0.023px;-webkit-text-stroke:.2px #0a0a0a;">11300</span>
<span class="t" style="left:778.1px;top:764.0px;font-size:14px;line-height:20px;color:#737373;letter-spacing:0.191px;">FCCS_Cash And Cash Equivalents</span>
<span class="t" style="left:1114.7px;top:764.0px;font-size:14px;line-height:20px;color:#737373;letter-spacing:0.496px;">Short Term Investment</span>
<span class="t" style="left:1448.4px;top:764.0px;font-size:14px;line-height:20px;color:#0a0a0a;transform:scaleX(1.35);transform-origin:0 50%;-webkit-text-stroke:.2px #0a0a0a;">-</span>
<span class="t" style="left:1536.3px;top:764.0px;font-size:14px;line-height:20px;color:#0a0a0a;transform:scaleX(1.35);transform-origin:0 50%;-webkit-text-stroke:.2px #0a0a0a;">-</span>
<div class="b" style="left:1613px;top:763px;width:86px;height:22px;border:1px solid #e5e5e5;border-radius:11px;box-sizing:border-box;background:#fff;"></div>
<span class="t" style="left:1622.5px;top:766.0px;font-size:12px;line-height:16px;color:#0a0a0a;letter-spacing:0.392px;-webkit-text-stroke:.2px #0a0a0a;">never share</span>
<span class="t" style="left:1767.5px;top:764.0px;font-size:14px;line-height:20px;color:#0a0a0a;transform:scaleX(1.35);transform-origin:0 50%;-webkit-text-stroke:.2px #0a0a0a;">-</span>
<div class="b" style="left:591px;top:797px;width:1264px;height:1px;background:#e5e5e5;"></div>
<span class="t" style="left:607.6px;top:811.0px;font-size:14px;line-height:20px;color:#0a0a0a;letter-spacing:-0.900px;-webkit-text-stroke:.2px #0a0a0a;">11501</span>
<span class="t" style="left:778.1px;top:811.0px;font-size:14px;line-height:20px;color:#737373;letter-spacing:0.191px;">FCCS_Cash And Cash Equivalents</span>
<span class="t" style="left:1114.7px;top:811.0px;font-size:14px;line-height:20px;color:#737373;letter-spacing:0.472px;">Clearing BNK Checking Account</span>
<span class="t" style="left:1448.4px;top:811.0px;font-size:14px;line-height:20px;color:#0a0a0a;transform:scaleX(1.35);transform-origin:0 50%;-webkit-text-stroke:.2px #0a0a0a;">-</span>
<span class="t" style="left:1536.3px;top:811.0px;font-size:14px;line-height:20px;color:#0a0a0a;transform:scaleX(1.35);transform-origin:0 50%;-webkit-text-stroke:.2px #0a0a0a;">-</span>
<div class="b" style="left:1613px;top:810px;width:86px;height:22px;border:1px solid #e5e5e5;border-radius:11px;box-sizing:border-box;background:#fff;"></div>
<span class="t" style="left:1622.5px;top:813.0px;font-size:12px;line-height:16px;color:#0a0a0a;letter-spacing:0.392px;-webkit-text-stroke:.2px #0a0a0a;">never share</span>
<span class="t" style="left:1767.5px;top:811.0px;font-size:14px;line-height:20px;color:#0a0a0a;transform:scaleX(1.35);transform-origin:0 50%;-webkit-text-stroke:.2px #0a0a0a;">-</span>
<div class="b" style="left:591px;top:844px;width:1264px;height:1px;background:#e5e5e5;"></div>
<span class="t" style="left:607.6px;top:858.0px;font-size:14px;line-height:20px;color:#0a0a0a;letter-spacing:-0.477px;-webkit-text-stroke:.2px #0a0a0a;">11502</span>
<span class="t" style="left:778.1px;top:858.0px;font-size:14px;line-height:20px;color:#737373;letter-spacing:0.191px;">FCCS_Cash And Cash Equivalents</span>
<span class="t" style="left:1114.7px;top:858.0px;font-size:14px;line-height:20px;color:#737373;letter-spacing:0.481px;">Clearing BNK2 Checking Account</span>
<span class="t" style="left:1448.4px;top:858.0px;font-size:14px;line-height:20px;color:#0a0a0a;transform:scaleX(1.35);transform-origin:0 50%;-webkit-text-stroke:.2px #0a0a0a;">-</span>
<span class="t" style="left:1536.3px;top:858.0px;font-size:14px;line-height:20px;color:#0a0a0a;transform:scaleX(1.35);transform-origin:0 50%;-webkit-text-stroke:.2px #0a0a0a;">-</span>
<div class="b" style="left:1613px;top:857px;width:86px;height:22px;border:1px solid #e5e5e5;border-radius:11px;box-sizing:border-box;background:#fff;"></div>
<span class="t" style="left:1622.5px;top:860.0px;font-size:12px;line-height:16px;color:#0a0a0a;letter-spacing:0.392px;-webkit-text-stroke:.2px #0a0a0a;">never share</span>
<span class="t" style="left:1767.5px;top:858.0px;font-size:14px;line-height:20px;color:#0a0a0a;transform:scaleX(1.35);transform-origin:0 50%;-webkit-text-stroke:.2px #0a0a0a;">-</span>
<div class="b" style="left:1880px;top:393px;width:15px;height:482px;background:#fafafa;border-radius:0 8px 0 0;"></div>
<svg class="ic" style="left:1882px;top:397px;width:11px;height:9px" viewBox="0 0 11 9"><path d="M5.5 2.1 L9.4 6.9 L1.6 6.9 Z" fill="#8b8b8b" stroke="#8b8b8b" stroke-width="1.8" stroke-linejoin="round"/></svg>
<div class="b" style="left:1883.3px;top:410.5px;width:9px;height:156.5px;background:#8b8b8b;border-radius:4.5px;"></div>
<svg class="ic" style="left:1882px;top:870px;width:11px;height:9px" viewBox="0 0 11 9"><path d="M5.5 6.9 L9.4 2.1 L1.6 2.1 Z" fill="#8b8b8b" stroke="#8b8b8b" stroke-width="1.8" stroke-linejoin="round"/></svg>
</main>
<div class="b" style="left:0px;top:0px;width:1896px;height:1px;background:#e2e2e2;"></div>
</body>
</html>
